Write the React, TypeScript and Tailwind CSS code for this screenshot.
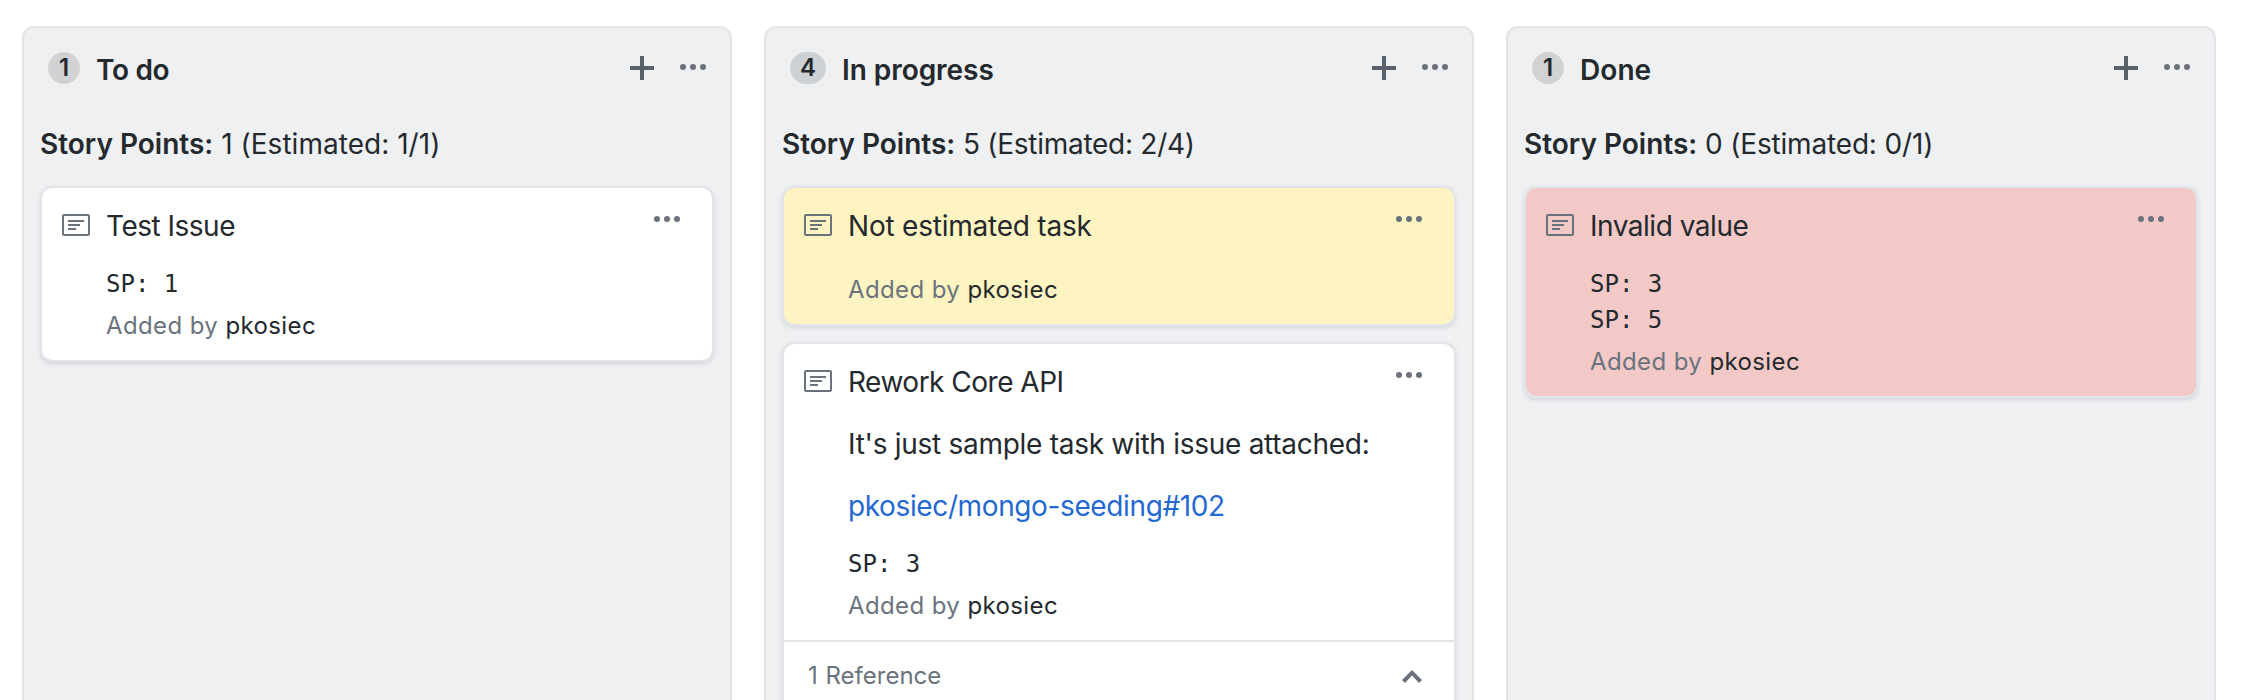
import type { ReactNode } from "react";

function PlusIcon() {
  return (
    <svg className="h-8 w-6 fill-[#586069]" viewBox="0 0 12 16" aria-hidden="true">
      <path d="M12 9H7v5H5V9H0V7h5V2h2v5h5v2z" />
    </svg>
  );
}

function KebabIcon() {
  return (
    <svg className="h-8 w-[26px] fill-[#6a737d]" viewBox="0 0 13 16" aria-hidden="true">
      <circle cx="1.5" cy="7.5" r="1.5" />
      <circle cx="6.5" cy="7.5" r="1.5" />
      <circle cx="11.5" cy="7.5" r="1.5" />
    </svg>
  );
}

function NoteIcon() {
  return (
    <svg className="mt-1.5 h-8 w-7 shrink-0 fill-[#6a737d]" viewBox="0 0 14 16" aria-hidden="true">
      <path
        fillRule="evenodd"
        d="M3 10h4V9H3v1zm0-2h6V7H3v1zm0-2h8V5H3v1zm10 6H1V3h12v9zM1 2c-.55 0-1 .45-1 1v9c0 .55.45 1 1 1h12c.55 0 1-.45 1-1V3c0-.55-.45-1-1-1H1z"
      />
    </svg>
  );
}

function ChevronUpIcon() {
  return (
    <svg className="h-8 w-5 fill-[#6a737d]" viewBox="0 0 10 16" aria-hidden="true">
      <path d="M10 10l-1.5 1.5L5 7.75 1.5 11.5 0 10l5-5 5 5z" />
    </svg>
  );
}

type ColumnProps = {
  count: number;
  countClass?: string;
  title: string;
  titleClass?: string;
  points: number;
  estimated: string;
  summaryClass?: string;
  children: ReactNode;
};

function Column({
  count,
  countClass = "w-8 bg-[#d1d2d4]",
  title,
  titleClass = "",
  points,
  estimated,
  summaryClass = "",
  children,
}: ColumnProps) {
  return (
    <section className="h-[760px] w-[710px] shrink-0 rounded-xl border-2 border-[#e2e4e8] bg-[#eff0f2] px-4 pt-5">
      <header className="flex h-11 items-start px-2 pt-1">
        <span className={`flex h-8 items-center justify-center rounded-full text-2xl leading-8 font-semibold ${countClass}`}>
          {count}
        </span>
        <h2 className={`-mt-1 ml-4 flex-1 text-[28px] leading-11 font-semibold ${titleClass}`}>{title}</h2>
        <button type="button" aria-label="Add"><PlusIcon /></button>
        <button type="button" aria-label="Column menu" className="ml-[26px]"><KebabIcon /></button>
      </header>
      <p className="mt-[30px] text-[28px] leading-11">
        <strong className="font-semibold">Story Points:</strong>
        <span className={summaryClass}> {points} (Estimated: {estimated})</span>
      </p>
      <div className="mt-5 flex flex-col gap-4">{children}</div>
    </section>
  );
}

type CardProps = {
  title: string;
  titleClass: string;
  color?: string;
  body?: ReactNode;
  points?: number[];
  reference?: string;
};

function Card({ title, titleClass, color = "bg-white", body, points = [], reference }: CardProps) {
  return (
    <article className={`rounded-xl border-2 border-[#e2e4e8] bg-clip-padding shadow-[0_2px_4px_rgba(106,115,125,0.2)] ${color}`}>
      <div className="flex items-start py-4 pr-8 pl-5">
        <NoteIcon />
        <div className="ml-4 flex-1">
          <h3 className={`text-[28px] leading-11 ${titleClass}`}>{title}</h3>
          {body}
          {points.length > 0 && (
            <div className="mt-[18px] font-['DejaVu_Sans_Mono',monospace] text-2xl leading-9">
              {points.map((p) => (
                <div key={p}>SP: {p}</div>
              ))}
            </div>
          )}
          <p className={`text-2xl leading-9 tracking-[0.39px] text-[#6a737d] ${points.length > 0 ? "mt-1.5" : "mt-6"}`}>
            Added by <a className="text-[#24292e]">pkosiec</a>
          </p>
        </div>
        <button type="button" aria-label="Card menu"><KebabIcon /></button>
      </div>
      {reference && (
        <div className="flex h-[90px] items-start justify-between border-t-2 border-[#e2e4e8] pt-4 pr-8 pl-6">
          <span className="text-2xl leading-9 [word-spacing:1px] text-[#6a737d]">{reference}</span>
          <span className="mt-0.5"><ChevronUpIcon /></span>
        </div>
      )}
    </article>
  );
}

export default function App() {
  return (
    <main className="flex h-[700px] w-[2242px] gap-8 overflow-hidden bg-white pt-[26px] pl-[22px] font-['Inter',sans-serif] text-[#24292e]">
      <Column count={1} title="To do" titleClass="tracking-[-0.32px]" points={1} estimated="1/1" summaryClass="tracking-[0.03px]">
        <Card title="Test Issue" titleClass="tracking-[-0.5px]" points={[1]} />
      </Column>
      <Column count={4} countClass="w-9 bg-[#ced1d4]" title="In progress" titleClass="tracking-[-0.05px]" points={5} estimated="2/4" summaryClass="tracking-[-0.27px]">
        <Card title="Not estimated task" titleClass="tracking-[-0.22px]" color="bg-[#fdf4c2]" />
        <Card
          title="Rework Core API"
          titleClass="tracking-[-0.5px]"
          body={
            <div className="text-[28px] leading-11">
              <p className="mt-[18px] tracking-[-0.28px] whitespace-nowrap">It's just sample task with issue attached:</p>
              <p className="mt-[18px]">
                <a className="tracking-[-0.38px] text-[#2468d2]">pkosiec/mongo-seeding#102</a>
              </p>
            </div>
          }
          points={[3]}
          reference="1 Reference"
        />
      </Column>
      <Column count={1} title="Done" titleClass="tracking-[0.07px]" points={0} estimated="0/1" summaryClass="tracking-[-0.17px]">
        <Card title="Invalid value" titleClass="tracking-[-0.48px]" color="bg-[#f3c9c7]" points={[3, 5]} />
      </Column>
    </main>
  );
}
